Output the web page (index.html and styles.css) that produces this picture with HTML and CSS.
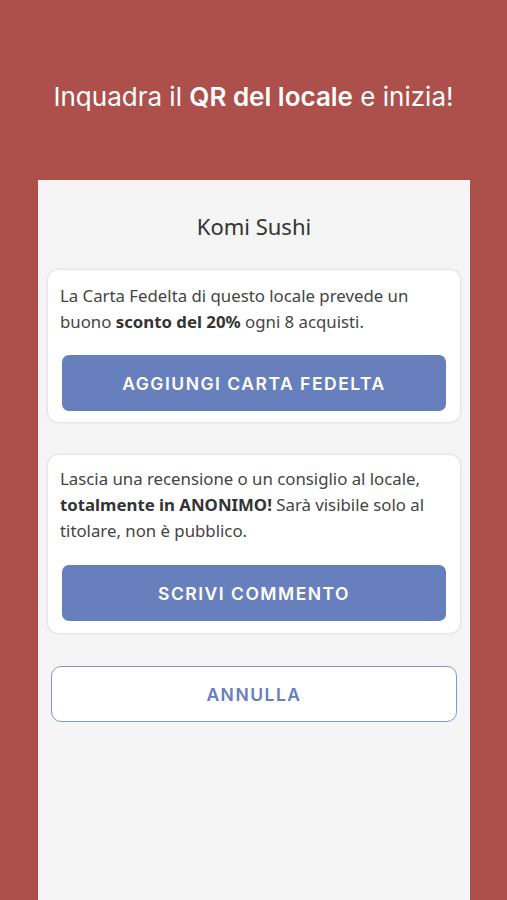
FILE: index.html
```html
<!DOCTYPE html>
<html lang="it">

<head>
    <meta charset="UTF-8">
    <meta name="viewport" content="width=device-width, initial-scale=1.0">
    <title>Komi Sushi</title>
    <link rel="stylesheet" href="styles.css">
</head>

<body>

    <header class="testata">
        <h1>Inquadra il <b>QR del locale</b> e inizia!</h1>
    </header>

    <main class="pannello">
        <h2 class="nome-locale">Komi Sushi</h2>

        <section class="scheda scheda-fedelta">
            <p>La Carta Fedelta di questo locale prevede un buono <b>sconto del 20%</b> ogni 8 acquisti.</p>
            <button class="tombol-pieno">AGGIUNGI CARTA FEDELTA</button>
        </section>

        <section class="scheda scheda-commento">
            <p>Lascia una recensione o un consiglio al locale, <b>totalmente in ANONIMO!</b> Sarà visibile solo al titolare, non è pubblico.</p>
            <button class="tombol-pieno">SCRIVI COMMENTO</button>
        </section>

        <button class="tombol-annulla">ANNULLA</button>
    </main>

</body>

</html>
```

FILE: styles.css
```css
body {
    margin: 0;
    background-color: #ad504c;
    font-family: "Noto Sans", Arial, sans-serif;
    min-height: 900px;
}

.testata {
    height: 180px;
    display: flex;
    justify-content: center;
    padding-top: 78px;
    box-sizing: border-box;
}

.testata h1 {
    margin: 0;
    font-family: Inter, "Liberation Sans", sans-serif;
    font-size: 26px;
    font-weight: 400;
    line-height: 38px;
    color: #ffffff;
}

.testata b {
    font-weight: 600;
}

.pannello {
    margin: 0 37px 0 38px;
    background-color: #f5f5f5;
    padding: 31px 10px 0 10px;
    min-height: 720px;
    box-sizing: border-box;
}

.nome-locale {
    margin: 0 0 29px 0;
    text-align: center;
    font-size: 22px;
    font-weight: 400;
    line-height: 30px;
    color: #333333;
}

.scheda {
    background-color: #ffffff;
    border-radius: 10px;
    box-shadow: 0 0 3px rgba(0, 0, 0, 0.18);
    padding: 13px 14px 11px 12px;
    margin-bottom: 33px;
}

.scheda p {
    margin: 0 0 20px 0;
    padding-right: 20px;
    font-size: 16.8px;
    line-height: 26px;
    color: #444444;
}

.scheda b {
    font-weight: 700;
    color: #333333;
}

.scheda-commento {
    padding-top: 11px;
    padding-bottom: 12px;
}

.scheda-commento p {
    margin-bottom: 21px;
}

.tombol-pieno {
    display: block;
    width: calc(100% - 2px);
    margin-left: 2px;
    height: 56px;
    border: none;
    border-radius: 7px;
    background-color: #6780bd;
    color: #ffffff;
    font-family: Inter, "Liberation Sans", sans-serif;
    font-size: 17.5px;
    font-weight: 600;
    letter-spacing: 1.5px;
    cursor: pointer;
}

.tombol-annulla {
    display: block;
    width: calc(100% - 6px);
    margin-left: 3px;
    height: 56px;
    background-color: #ffffff;
    border: 1px solid #8597c9;
    border-radius: 10px;
    color: #6780bd;
    font-family: Inter, "Liberation Sans", sans-serif;
    font-size: 17.5px;
    font-weight: 600;
    letter-spacing: 1.5px;
    cursor: pointer;
}
```
